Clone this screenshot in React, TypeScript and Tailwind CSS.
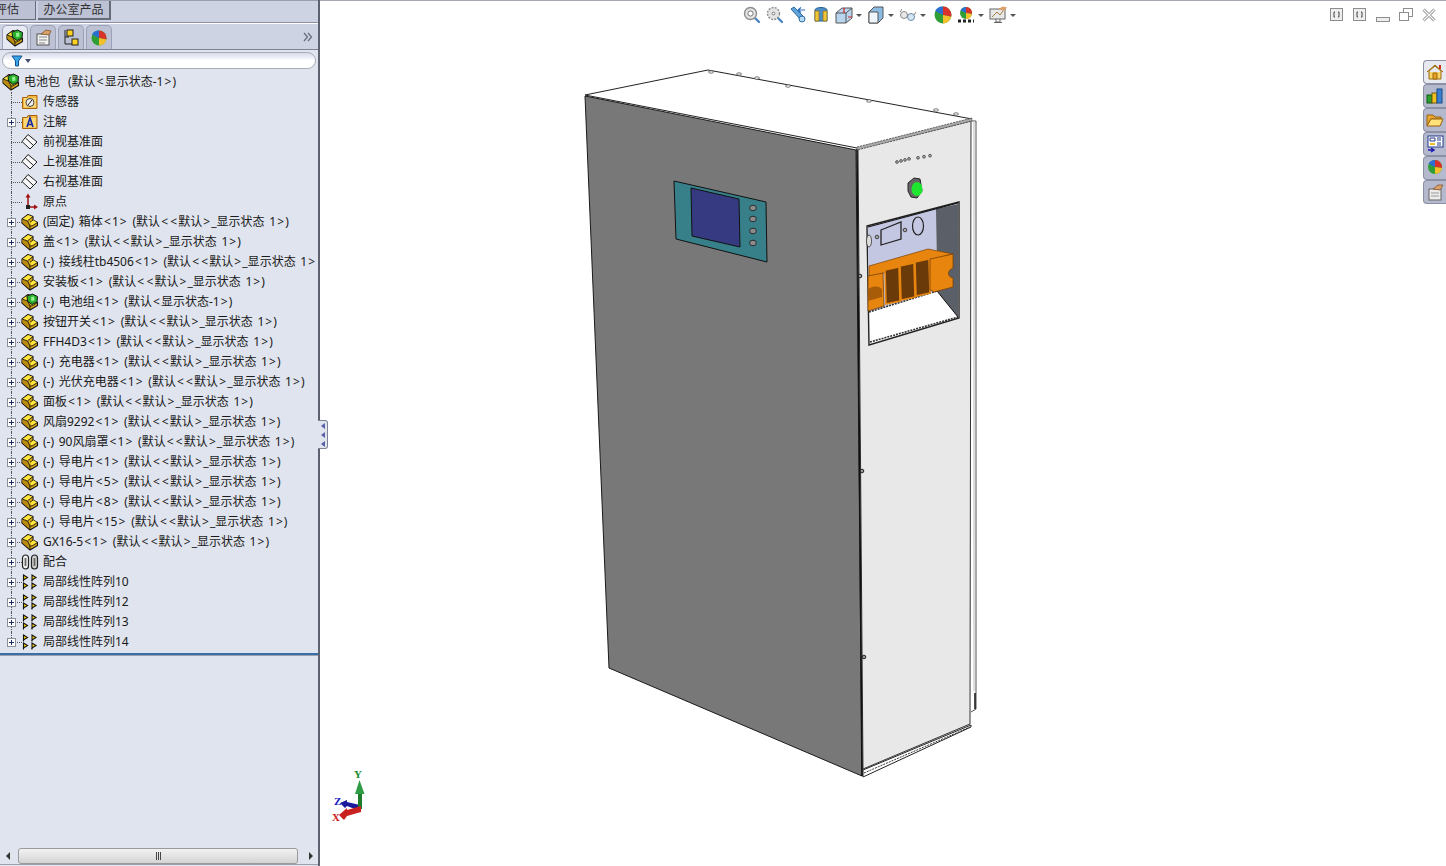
import React from 'react';

const Part = ({ green = false }: { green?: boolean }) => (
  <svg width="18" height="18" viewBox="0 0 18 18" className="shrink-0">
    <path d="M1 6 L7 1.5 L12 3.5 V7 L16.5 9.5 V12.5 L9 17 L1 10 Z" fill="#e0aa14" stroke="#151515" strokeWidth="1.1" strokeLinejoin="round" />
    <path d="M1.5 6 L7 2 L11.5 3.8 L6.5 8 Z" fill="#ffe53c" />
    <path d="M9 9.2 L12 7 L16 9.6 L11 13 Z" fill="#ffe53c" />
    <path d="M1.5 6.4 L6.5 8.4 L9 13 V16.4 L1.5 9.8 Z" fill="#b98c10" />
    <path d="M1.5 6.2 L6.5 8 L12 3.5 M6.5 8 L9 13 L11 13 L16.5 9.5 M9 13 V17 M9 9.2 L12 7" fill="none" stroke="#151515" strokeWidth="0.9" />
    {green && <path d="M6 3 L11.5 1 L16.5 3.5 L16 9 L11 11.5 L6.5 8 Z" fill="#27ae2b" stroke="#151515" />}
    {green && <path d="M10 4 L13.2 3.4 L13.5 7.5 L10.4 8.2 Z" fill="#92f28f" />}
  </svg>
);

const Folder = ({ children }: { children: React.ReactNode }) => (
  <svg width="16" height="16" viewBox="0 0 16 16" className="shrink-0">
    <path d="M0.5 3.5 H5 L6 1.5 H15 V14.5 H0.5 Z" fill="#f4b93f" stroke="#a8620c" />
    <rect x="2" y="4" width="12" height="9.5" fill="#fad777" />
    {children}
  </svg>
);

const Plane = () => (
  <svg width="18" height="18" viewBox="0 0 18 18" className="shrink-0">
    <path d="M7 1.5 L16 9 L9 16 L1 8.5 Z" fill="#f8f8f8" stroke="#1c1c1c" />
    <path d="M4.5 5 L12.5 12.5" stroke="#1c1c1c" />
  </svg>
);

const Origin = () => (
  <svg width="18" height="18" viewBox="0 0 18 18" className="shrink-0">
    <path d="M7 3 V14 H15" fill="none" stroke="#a01010" strokeWidth="1.5" />
    <path d="M7 0.5 L4.5 4.5 H9.5 Z M17 14 L13 11.5 V16.5 Z" fill="#a01010" />
    <rect x="5" y="12" width="4" height="4" fill="#222" />
  </svg>
);

const Mates = () => (
  <svg width="18" height="16" viewBox="0 0 18 16" className="shrink-0">
    <rect x="1.5" y="1" width="6" height="14" rx="3" fill="#f2f2f2" stroke="#222" strokeWidth="1.2" />
    <rect x="3.6" y="4" width="1.8" height="8" fill="#666" />
    <rect x="10.5" y="1" width="6" height="14" rx="3" fill="#cfcfcf" stroke="#222" strokeWidth="1.2" />
    <rect x="12.6" y="4" width="1.8" height="8" fill="#666" />
  </svg>
);

const Pattern = () => (
  <svg width="16" height="16" viewBox="0 0 16 16" className="shrink-0">
    {[[1.5, 1], [10, 1], [1.5, 9], [10, 9]].map(([x, y], i) => (
      <g key={i}>
        <path d={`M${x} ${y} V${y + 5} L${x + 4} ${y + 2.5} Z`} fill="#ffd800" stroke="#111" strokeWidth="1.1" />
        <path d={`M${x} ${y + 5} V${y + 6.5}`} stroke="#111" strokeWidth="1.1" />
      </g>
    ))}
  </svg>
);

const Ball = ({ size = 16 }: { size?: number }) => (
  <svg width={size} height={size} viewBox="0 0 16 16" className="shrink-0">
    <circle cx="8" cy="8" r="7.5" fill="#2f9e35" />
    <path d="M8 8 L1 4.5 A7.5 7.5 0 0 1 8 0.5 Z" fill="#2a6fd0" />
    <path d="M8 8 V0.5 A7.5 7.5 0 0 1 15.3 9.5 Z" fill="#d8322a" />
    <path d="M8 8 L15.3 9.5 A7.5 7.5 0 0 1 8 15.5 Z" fill="#f2c12c" />
  </svg>
);

const Label = ({ text }: { text: string }) => (
  <span className="[word-spacing:1.5px]">
    {text.split(/([<>])/).map((s, i) =>
      s === '<' || s === '>' ? <span key={i} className="mx-[1.1px]">{s}</span> : s
    )}
  </span>
);

type Row = { label: string; icon: React.ReactNode; plus?: boolean };

const suffix = ' (默认<<默认>_显示状态 1>)';
const part = (label: string, green = false): Row => ({ label, icon: <Part green={green} />, plus: true });

const rows: Row[] = [
  {
    label: '传感器',
    icon: (
      <Folder>
        <circle cx="8" cy="8.5" r="4" fill="#eee" stroke="#444" />
        <path d="M6 11 L10 6" stroke="#222" />
      </Folder>
    ),
  },
  {
    label: '注解',
    plus: true,
    icon: (
      <Folder>
        <path d="M5 13 L8 4 L11 13 M6 10.5 H10" fill="none" stroke="#1a2ca8" strokeWidth="1.7" />
      </Folder>
    ),
  },
  { label: '前视基准面', icon: <Plane /> },
  { label: '上视基准面', icon: <Plane /> },
  { label: '右视基准面', icon: <Plane /> },
  { label: '原点', icon: <Origin /> },
  part('(固定) 箱体<1>' + suffix),
  part('盖<1>' + suffix),
  part('(-) 接线柱tb4506<1> (默认<<默认>_显示状态 1>'),
  part('安装板<1>' + suffix),
  part('(-) 电池组<1> (默认<显示状态-1>)', true),
  part('按钮开关<1>' + suffix),
  part('FFH4D3<1>' + suffix),
  part('(-) 充电器<1>' + suffix),
  part('(-) 光伏充电器<1>' + suffix),
  part('面板<1>' + suffix),
  part('风扇9292<1>' + suffix),
  part('(-) 90风扇罩<1>' + suffix),
  part('(-) 导电片<1>' + suffix),
  part('(-) 导电片<5>' + suffix),
  part('(-) 导电片<8>' + suffix),
  part('(-) 导电片<15>' + suffix),
  part('GX16-5<1>' + suffix),
  { label: '配合', icon: <Mates />, plus: true },
  { label: '局部线性阵列10', icon: <Pattern />, plus: true },
  { label: '局部线性阵列12', icon: <Pattern />, plus: true },
  { label: '局部线性阵列13', icon: <Pattern />, plus: true },
  { label: '局部线性阵列14', icon: <Pattern />, plus: true },
];

const TreeRow = ({ row, last }: { row: Row; last: boolean }) => (
  <div className="relative flex h-5 items-center whitespace-nowrap">
    <span className={`absolute left-[11px] top-0 w-0 border-l border-dotted border-[#555] ${last ? 'h-2.5' : 'h-5'}`} />
    <span className="absolute left-[11px] top-2.5 h-0 w-[11px] border-t border-dotted border-[#555]" />
    {row.plus && (
      <span className="absolute left-[7px] top-[6px] flex h-[9px] w-[9px] items-center justify-center border border-[#8a8f9c] bg-white">
        <span className="relative block h-[5px] w-[5px]">
          <span className="absolute left-0 top-[2px] h-px w-[5px] bg-[#1c2a6a]" />
          <span className="absolute left-[2px] top-0 h-[5px] w-px bg-[#1c2a6a]" />
        </span>
      </span>
    )}
    <span className="ml-[21px] flex w-[18px] shrink-0 justify-center">{row.icon}</span>
    <span className="ml-[4px]"><Label text={row.label} /></span>
  </div>
);

const ToolIcon = ({ children, caret = false }: { children: React.ReactNode; caret?: boolean }) => (
  <div className="flex items-center">
    <svg width="18" height="18" viewBox="0 0 18 18" className="shrink-0">{children}</svg>
    {caret && <span className="ml-[3px] h-0 w-0 border-x-[3px] border-t-[3px] border-x-transparent border-t-[#555]" />}
  </div>
);

const Magnifier = ({ dashed = false }: { dashed?: boolean }) => (
  <>
    <path d="M11 11 L16 16" stroke="#4d84c4" strokeWidth="2.4" strokeLinecap="round" />
    <circle cx="7.5" cy="7.5" r="6" fill="#e4e4e4" stroke="#8d8d8d" strokeWidth="1.4" strokeDasharray={dashed ? '2 1.2' : undefined} />
    <circle cx="7.5" cy="7.5" r={dashed ? 1.4 : 2.6} fill="#fff" stroke="#777" />
  </>
);

const SideTab = ({ children, active = false }: { children: React.ReactNode; active?: boolean }) => (
  <div className={`flex h-6 w-[23px] items-center justify-center rounded-l-[4px] border border-r-0 border-[#8c90a4] ${active ? 'bg-[#e8eaf2]' : 'bg-[#b4b9cd]'}`}>
    <svg width="18" height="18" viewBox="0 0 18 18">{children}</svg>
  </div>
);

const WinBtn = ({ children }: { children: React.ReactNode }) => (
  <svg width="14" height="14" viewBox="0 0 14 14" className="shrink-0" fill="none" stroke="#8d8d8d">{children}</svg>
);

const Tab = ({ children, active = false }: { children: React.ReactNode; active?: boolean }) => (
  <div className={`flex h-[24px] w-[26px] items-center justify-center rounded-t-[5px] border border-b-0 border-[#9ca1b4] ${active ? 'bg-[#e6e9f2]' : 'bg-[#bcc1d4]'}`}>
    {children}
  </div>
);

const Block = ({ x, top, bottom }: { x: number; top: number; bottom: number }) => (
  <path
    d={`M${x} ${top} L${x + 14} ${top - 3} L${x + 15} ${bottom - 3} L${x + 1} ${bottom} Z`}
    fill="#6a3a08"
    stroke="#e8850f"
    strokeWidth="1.6"
  />
);

const Model = () => (
  <svg viewBox="320 0 1126 866" className="absolute inset-0 h-[866px] w-[1126px]">
    {/* top */}
    <path d="M585 94 L708 69 L972 118 L857 147 Z" fill="#fff" stroke="#222" strokeWidth="1" />
    {[[711, 71], [739, 73], [757, 77], [788, 85], [869, 100], [936, 109], [956, 113]].map(([x, y]) => (
      <ellipse key={x} cx={x} cy={y} rx="2.5" ry="1.2" fill="#fff" stroke="#555" strokeWidth="0.8" />
    ))}
    <path d="M586 97 L856 151" stroke="#222" strokeWidth="1" />
    {/* gray side */}
    <path d="M585 95 L856 149 L862 775 L609 667 Z" fill="#787878" stroke="#1a1a1a" strokeWidth="1" />
    {/* front */}
    <path d="M858 148 L971 120 L970 723 L863 768 Z" fill="#e8e8e8" stroke="#333" strokeWidth="1" />
    <path d="M857 148 L862 775" stroke="#111" strokeWidth="1.6" />
    <path d="M857 146 L972 117 L972 120 L857 149 Z" fill="#aaa" stroke="#333" strokeWidth="0.7" strokeDasharray="2 1" />
    <path d="M863 769 L971 724 V726 L863 776 Z" fill="#fff" stroke="#222" strokeWidth="1" />
    <path d="M864 772 L970 726" stroke="#333" strokeWidth="1" strokeDasharray="2 1" />
    <path d="M972 120 H976 V708 L971 711" fill="none" stroke="#555" strokeWidth="1" />
    <path d="M975 692 V708" stroke="#111" strokeWidth="1.5" />
    <path d="M974 120 V690" stroke="#bbb" strokeWidth="1" />
    {/* LEDs */}
    {[897, 901, 905, 909, 918, 924, 930].map((x, i) => (
      <circle key={x} cx={x} cy={161 - i * 1.05} r="1.4" fill="#aaa" stroke="#333" strokeWidth="0.7" />
    ))}
    {/* button */}
    <path d="M908 182 L914 177 L920 178 L922 190 L917 197 L911 196 L908 190 Z" fill="#666" stroke="#222" />
    <ellipse cx="917" cy="188" rx="5.5" ry="7" fill="#1ee62e" />
    {/* screws */}
    {[[860, 275], [862, 470], [864, 656]].map(([x, y]) => (
      <circle key={y} cx={x} cy={y} r="1.8" fill="#999" stroke="#222" strokeWidth="1" />
    ))}
    {/* opening */}
    <path d="M867 225 L959 201 V317 L869 344 Z" fill="#fff" stroke="#222" strokeWidth="1.4" />
    <path d="M868 226 L936 208 V290 L869 311 Z" fill="#c4c7e2" />
    <path d="M936 208 L958 203 V316 L937 290 Z" fill="#5b6068" />
    <path d="M868 226 L958 202" stroke="#111" strokeWidth="1.2" />
    <path d="M869 311 L937 290" stroke="#333" strokeWidth="1.6" strokeDasharray="2 1" />
    <path d="M937 290 L958 316" stroke="#111" strokeWidth="1" />
    <path d="M870 341 L958 316" stroke="#333" strokeWidth="1.6" strokeDasharray="2 1" />
    <path d="M881 229 L901 221 L901 238 L881 244 Z" fill="#c4c7e2" stroke="#222" strokeWidth="1.3" />
    <ellipse cx="918" cy="225" rx="5.5" ry="9" fill="#c4c7e2" stroke="#222" strokeWidth="1.2" />
    <circle cx="877" cy="236" r="1.8" fill="#aaa" stroke="#222" strokeWidth="0.8" />
    <circle cx="905" cy="229" r="1.8" fill="#aaa" stroke="#222" strokeWidth="0.8" />
    <ellipse cx="869" cy="240" rx="2.5" ry="6" fill="#ddd" stroke="#333" strokeWidth="0.8" />
    {/* copper bar */}
    <path d="M869 265 L928 248 L953 253 L930 259 L869 276 Z" fill="#e8850f" stroke="#7a4205" strokeWidth="0.7" />
    <Block x={885} top={269} bottom={303} />
    <Block x={900} top={265} bottom={299} />
    <Block x={915} top={261} bottom={295} />
    <path d="M930 258 L953 253 V267 C947 269 947 276 953 277 V286 L934 291 L930 289 Z" fill="#e8850f" stroke="#7a4205" strokeWidth="0.8" />
    <path d="M868 275 L883 272 L884 305 L868 310 Z" fill="#e8850f" stroke="#7a4205" strokeWidth="0.8" />
    <path d="M868 288 C874 284 882 285 882 290 V296 L868 300 Z" fill="#a85c08" />
    {/* screen */}
    <path d="M674 180 L766 201 L767 261 L676 238 Z" fill="#37808a" stroke="#111" strokeWidth="1" />
    <path d="M691 187 L739 198 L740 246 L692 235 Z" fill="#363a80" stroke="#111" strokeWidth="1" />
    {[207, 218, 230, 242].map((y) => (
      <ellipse key={y} cx="753" cy={y} rx="3.4" ry="2.8" fill="#8c8c8c" stroke="#222" strokeWidth="0.9" />
    ))}
  </svg>
);

const Triad = () => (
  <svg viewBox="330 765 40 60" className="absolute left-[10px] top-[765px] h-[60px] w-[40px]">
    <path d="M360 804 L347 801 L347 799 L340 802 L345 807 L347 805 L360 810 Z" fill="#1a1a9a" />
    <path d="M358 790 H362 V808 H358 Z" fill="#1d7d2c" />
    <path d="M359.5 779 L364.5 793 H355 Z" fill="#2f9c45" />
    <path d="M361 805 L347 809 L347 807 L339 814 L344 819 L347 815 L361 811 Z" fill="#c92020" />
    <text x="354" y="777" fontSize="11" fontWeight="700" fill="#1a8a2a" fontFamily="Liberation Serif, serif">Y</text>
    <text x="334" y="804" fontSize="11" fontWeight="700" fill="#1a1ac0" fontFamily="Liberation Serif, serif">Z</text>
    <text x="332" y="820" fontSize="11" fontWeight="700" fill="#d01818" fontFamily="Liberation Serif, serif">X</text>
  </svg>
);

export default function App() {
  return (
    <div className="flex h-[866px] w-[1446px] overflow-hidden bg-white text-[12px] text-[#1a1a1a] [font-family:'Noto_Sans','Noto_Sans_CJK_SC',sans-serif]">
      <aside className="flex w-[320px] shrink-0 flex-col border-r-2 border-[#5d6270] bg-[#e0e4ee]">
        <div className="h-[50px] shrink-0 bg-[#ced3e4]">
          <div className="flex h-5 overflow-hidden border-t border-[#9a9eb0]">
            <div className="ml-[-16px] flex h-[19px] w-[52px] shrink-0 items-center justify-end border-r border-b border-[#666b7a] bg-[#bcc1d4] pr-[16px] text-[#333]">评估</div>
            <div className="ml-[2px] flex h-[19px] w-[73px] items-center justify-center border-r-2 border-b-2 border-[#666b7a] bg-[#bcc1d4] text-[#333]">办公室产品</div>
          </div>
          <div className="mt-[2px] h-[2px] border-t border-b border-t-[#8d91a3] border-b-white" />
          <div className="flex h-[26px] items-end border-b border-[#7d8294] pl-[2px]">
            <div className="flex gap-[2px]">
              <Tab active><Part green /></Tab>
              <Tab>
                <svg width="18" height="18" viewBox="0 0 18 18">
                  <rect x="3" y="5" width="12" height="11" fill="#f2f2f2" stroke="#555" />
                  <path d="M5 8 H13 M5 11 H13 M5 14 H11" stroke="#888" />
                  <path d="M7 5 L12 1 L17 2 L15 6 Z" fill="#d9a06a" stroke="#7a4a20" strokeWidth="0.7" />
                </svg>
              </Tab>
              <Tab>
                <svg width="18" height="18" viewBox="0 0 18 18">
                  <path d="M3 1 V15 H11 M3 8 H7" fill="none" stroke="#222" />
                  <rect x="5" y="1" width="6" height="6" fill="#ffd21f" stroke="#222" />
                  <rect x="10" y="10" width="6" height="6" fill="#ffd21f" stroke="#222" />
                </svg>
              </Tab>
              <Tab><Ball /></Tab>
            </div>
            <svg width="10" height="10" viewBox="0 0 10 10" className="mb-[7px] ml-auto mr-[5px]" fill="none" stroke="#6a6e7c" strokeWidth="1.3">
              <path d="M1 1 L4.5 5 L1 9 M5 1 L8.5 5 L5 9" />
            </svg>
          </div>
        </div>
        <div className="shrink-0 px-[2px] pt-[2px]">
          <div className="flex h-[17px] items-center rounded-full border border-[#a8acb8] bg-gradient-to-b from-[#d6daea] via-white to-white pl-[8px]">
            <svg width="12" height="12" viewBox="0 0 12 12">
              <path d="M1 1 H11 L7.5 6 V11 H4.5 V6 Z" fill="#37a6e8" stroke="#14508c" />
            </svg>
            <span className="ml-[2px] h-0 w-0 border-x-[3.5px] border-t-[4px] border-x-transparent border-t-[#44506e]" />
          </div>
        </div>
        <div className="mt-[3px] h-[583px] shrink-0 overflow-hidden border-b-2 border-[#3a6ea8]">
          <div className="flex h-5 items-center whitespace-nowrap pl-[2px]">
            <Part green />
            <span className="ml-[4px]">电池包<span className="ml-[8px]"><Label text="(默认<显示状态-1>)" /></span></span>
          </div>
          {rows.map((row, i) => (
            <TreeRow key={i} row={row} last={i === rows.length - 1} />
          ))}
        </div>
        <div className="h-px shrink-0 bg-[#9da1ae]" />
        <div className="flex-1" />
        <div className="mb-px flex h-[18px] shrink-0 items-center border-b border-[#9da1ae]">
          <span className="ml-[6px] h-0 w-0 border-y-[4px] border-r-[4px] border-y-transparent border-r-[#333]" />
          <div className="ml-[8px] flex h-[16px] w-[280px] items-center justify-center rounded-[3px] border border-[#9a9a9a] bg-gradient-to-b from-[#f2f2f2] to-[#d4d4d4]">
            <span className="flex gap-px">
              <span className="h-[8px] w-px bg-[#444]" />
              <span className="h-[8px] w-px bg-[#444]" />
              <span className="h-[8px] w-px bg-[#444]" />
            </span>
          </div>
          <span className="ml-[11px] h-0 w-0 border-y-[4px] border-l-[4px] border-y-transparent border-l-[#333]" />
        </div>
      </aside>

      <main className="relative flex-1 border-t border-[#a4a7b2]">
        <Model />
        <Triad />
        <div className="absolute left-[-2px] top-[419px] flex h-[29px] w-[10px] flex-col items-end justify-center gap-[3px] rounded-r-[3px] border border-l-0 border-[#7d8294] bg-[#e0e4ee] pr-[2px]">
          {[0, 1, 2].map((i) => (
            <span key={i} className="h-0 w-0 border-y-[3px] border-r-[4px] border-y-transparent border-r-[#5a5fa8]" />
          ))}
        </div>

        <div className="absolute left-[423px] top-[5px] flex items-center gap-[5px]">
          <ToolIcon><Magnifier /></ToolIcon>
          <ToolIcon><Magnifier dashed /></ToolIcon>
          <ToolIcon>
            <path d="M2 3 L12 14 L15 11 L5 1 Z" fill="#5fa5dc" stroke="#2e6aa0" />
            <path d="M9 4 H16 M9 4 L12 1.5 M9 4 L12 6.5" stroke="#2a6fc4" strokeWidth="1.2" fill="none" />
            <circle cx="13" cy="13" r="3" fill="#b6dcf5" stroke="#2e6aa0" />
          </ToolIcon>
          <ToolIcon>
            <path d="M3 4 A6 2.5 0 0 1 15 4 V15 H3 Z" fill="#4f8fc8" stroke="#27608c" />
            <path d="M3 5 H7 V15 H3 Z M11 5 H15 V15 H11 Z" fill="#f0c53a" stroke="#8a6a10" strokeWidth="0.7" />
          </ToolIcon>
          <ToolIcon caret>
            <path d="M1 7 L7 2 H17 V12 L11 17 H1 Z" fill="#b9d4ee" stroke="#555" />
            <path d="M1 7 H11 V17 M11 7 L17 2" fill="none" stroke="#555" />
            <path d="M9 2 V7 M13 11 H17" stroke="#d02020" strokeWidth="1.2" />
          </ToolIcon>
          <ToolIcon caret>
            <path d="M2 6 L7 1 H16 V12 L11 17 H2 Z" fill="#8cbce4" stroke="#555" />
            <path d="M2 6 H11 V17 H2 Z" fill="#eef5fb" stroke="#555" />
          </ToolIcon>
          <ToolIcon caret>
            <circle cx="5" cy="9" r="3.5" fill="#e8e8e8" stroke="#888" />
            <circle cx="12" cy="11" r="3.5" fill="#d5e6f5" stroke="#6f8aa8" />
            <path d="M1 6 L3 3 M8 10 H9 M15 9 L17 6" stroke="#888" fill="none" />
          </ToolIcon>
          <div className="ml-[3px]"><Ball size={18} /></div>
          <ToolIcon caret>
            <circle cx="9" cy="7" r="6" fill="#2f9e35" />
            <path d="M9 7 L3.5 4.5 A6 6 0 0 1 9 1 Z" fill="#2a6fd0" />
            <path d="M9 7 V1 A6 6 0 0 1 15 8 Z" fill="#d8322a" />
            <path d="M9 7 L15 8 A6 6 0 0 1 9 13 Z" fill="#f2c12c" />
            <path d="M1 15 H17" stroke="#222" strokeWidth="3" strokeDasharray="3 2" />
          </ToolIcon>
          <ToolIcon caret>
            <rect x="1" y="3" width="15" height="10" fill="#e8e8e8" stroke="#666" />
            <path d="M3 11 L8 6 L11 9 L14 5" stroke="#a08040" fill="none" />
            <path d="M7 13 V16 H11 V13 M5 16.5 H13" stroke="#666" fill="none" />
            <path d="M9 3 L14 0.5 L18 1.5 L15 5 Z" fill="#d9a06a" />
          </ToolIcon>
        </div>

        <div className="absolute left-[1010px] top-[7px] flex items-center gap-[9px]">
          <WinBtn><rect x="0.5" y="0.5" width="12" height="12" fill="#eee" /><path d="M5 4 H4 V9 H5 M8 4 H9 V9 H8" stroke="#444" /></WinBtn>
          <WinBtn><rect x="0.5" y="0.5" width="12" height="12" fill="#eee" /><path d="M5 4 H4 V9 H5 M8 4 H9 V9 H8" stroke="#444" /></WinBtn>
          <WinBtn><rect x="0.5" y="9.5" width="13" height="4" fill="#eee" /></WinBtn>
          <WinBtn><rect x="4.5" y="0.5" width="9" height="8" /><rect x="0.5" y="4.5" width="9" height="8" fill="#fff" /></WinBtn>
          <WinBtn>
            <path d="M1.5 1.5 L12.5 12.5 M12.5 1.5 L1.5 12.5" strokeWidth="3" />
            <path d="M1.5 1.5 L12.5 12.5 M12.5 1.5 L1.5 12.5" strokeWidth="1.2" stroke="#fff" />
          </WinBtn>
        </div>

        <div className="absolute right-0 top-[59px] flex flex-col">
          <SideTab active>
            <path d="M1 9 L9 2 L17 9 M3 8 V16 H15 V8 L9 3 Z" fill="#f8d66a" stroke="#9a6a10" />
            <path d="M7 10 H11 V16 H7 Z" fill="#e8a020" stroke="#9a6a10" />
            <rect x="13" y="2" width="2" height="4" fill="#d03020" />
          </SideTab>
          <SideTab>
            <rect x="1" y="8" width="5" height="8" fill="#2aa12a" stroke="#145a14" />
            <rect x="6" y="6" width="5" height="10" fill="#f0c020" stroke="#7a5a10" />
            <rect x="11" y="2" width="5" height="14" fill="#3a7fd0" stroke="#1a4a8a" />
          </SideTab>
          <SideTab>
            <path d="M1 4 H7 L9 6 H15 V8 H5 L1 15 Z" fill="#e8a830" stroke="#9a6010" />
            <path d="M5 8 H17 L14 15 H1 Z" fill="#ffe27a" stroke="#9a6010" />
          </SideTab>
          <SideTab>
            <rect x="2" y="1" width="15" height="11" fill="#fff" stroke="#223a8a" />
            <path d="M4 3 H9 V6 H4 Z M11 3 H15 M11 5 H15 M11 8 H15 M11 10 H15" stroke="#223a8a" fill="none" />
            <path d="M4 8 H9 V10 H4 Z" fill="#f0c020" />
            <path d="M2 15 H8 M5 13 L8 15 L5 17" stroke="#1a1ab0" strokeWidth="1.5" fill="none" />
          </SideTab>
          <SideTab>
            <circle cx="9" cy="8" r="7" fill="#2f9e35" />
            <path d="M9 8 L2.5 5 A7 7 0 0 1 9 1 Z" fill="#2a6fd0" />
            <path d="M9 8 V1 A7 7 0 0 1 16 9 Z" fill="#d8322a" />
            <path d="M9 8 L16 9 A7 7 0 0 1 9 15 Z" fill="#f2c12c" />
          </SideTab>
          <SideTab>
            <rect x="3" y="6" width="12" height="11" fill="#ececec" stroke="#666" />
            <path d="M5 10 H13 M5 13 H13" stroke="#999" />
            <path d="M7 6 L12 2 L17 2 L14 7 Z" fill="#d9a06a" stroke="#7a4a20" strokeWidth="0.7" />
          </SideTab>
        </div>
      </main>
    </div>
  );
}
